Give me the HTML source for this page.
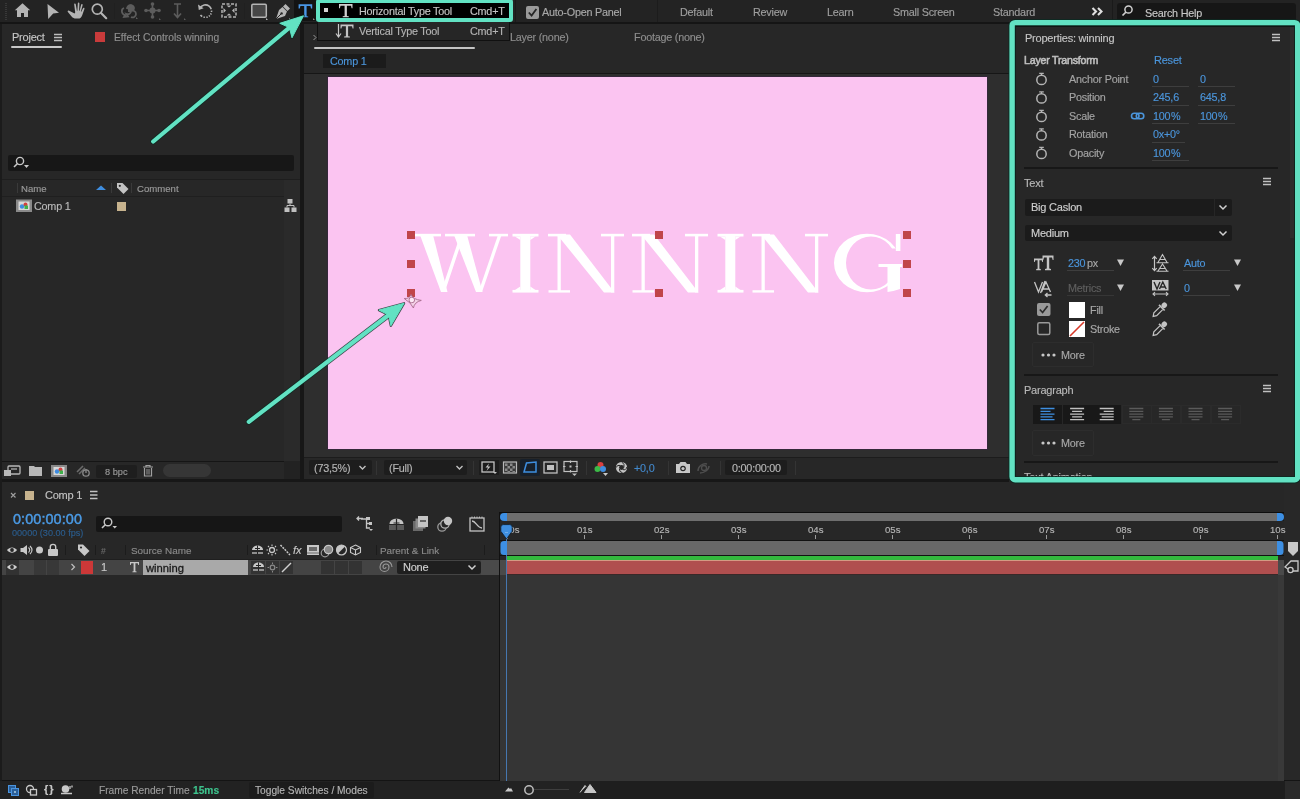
<!DOCTYPE html>
<html><head><meta charset="utf-8">
<style>
*{box-sizing:border-box}
html,body{margin:0;padding:0}
body{width:1300px;height:799px;position:relative;overflow:hidden;background:#1a1a1a;font-family:"Liberation Sans",sans-serif;font-size:10.4px;color:#a6a6a6;line-height:1}
.a{position:absolute}
.t{position:absolute;white-space:pre;will-change:transform;-webkit-text-stroke:0.15px currentColor}
.letter{position:absolute;top:219px;font-size:90px;line-height:90px;font-family:"Liberation Serif",serif;color:#fff;white-space:pre;transform-origin:0 0}
#ov{position:absolute;left:0;top:0;width:1300px;height:799px}
</style></head><body>
<div class="a" style="left:0px;top:0px;width:1300px;height:22px;background:#232323;"></div>
<div class="a" style="left:0px;top:22px;width:1300px;height:2px;background:#151515;"></div>
<div class="a" style="left:0px;top:24px;width:300px;height:455px;background:#272727;"></div>
<div class="a" style="left:300px;top:24px;width:4px;height:458px;background:#171717;"></div>
<div class="a" style="left:0px;top:479px;width:1300px;height:3px;background:#171717;"></div>
<div class="a" style="left:304px;top:24px;width:705px;height:49px;background:#272727;"></div>
<div class="a" style="left:304px;top:73px;width:705px;height:1px;background:#161616;"></div>
<div class="a" style="left:304px;top:74px;width:705px;height:383px;background:#2e2e2e;"></div>
<div class="a" style="left:304px;top:457px;width:705px;height:1px;background:#1c1c1c;"></div>
<div class="a" style="left:304px;top:458px;width:705px;height:21px;background:#272727;"></div>
<div class="a" style="left:327px;top:76px;width:661px;height:374px;background:#34283a;"></div>
<div class="a" style="left:328px;top:77px;width:659px;height:372px;background:#fbc4f1;"></div>
<div class="a" style="left:1009px;top:20px;width:291px;height:463px;background:#272727;"></div>
<div class="a" style="left:0px;top:482px;width:1300px;height:299px;background:#272727;"></div>
<div class="a" style="left:1284px;top:482px;width:16px;height:299px;background:#282828;"></div>
<div class="a" style="left:0px;top:781px;width:1300px;height:18px;background:#222222;"></div>
<div class="a" style="left:0px;top:780px;width:1300px;height:1px;background:#141414;"></div>
<div class="a" style="left:5px;top:3px;width:2px;height:1px;background:#383838;"></div>
<div class="a" style="left:5px;top:5px;width:2px;height:1px;background:#383838;"></div>
<div class="a" style="left:5px;top:7px;width:2px;height:1px;background:#383838;"></div>
<div class="a" style="left:5px;top:9px;width:2px;height:1px;background:#383838;"></div>
<div class="a" style="left:5px;top:11px;width:2px;height:1px;background:#383838;"></div>
<div class="a" style="left:5px;top:13px;width:2px;height:1px;background:#383838;"></div>
<div class="a" style="left:5px;top:15px;width:2px;height:1px;background:#383838;"></div>
<div class="a" style="left:5px;top:17px;width:2px;height:1px;background:#383838;"></div>
<div class="a" style="left:5px;top:19px;width:2px;height:1px;background:#383838;"></div>
<div class="a" style="left:114px;top:3px;width:1px;height:16px;background:#202020;"></div>
<div class="a" style="left:244px;top:3px;width:1px;height:16px;background:#202020;"></div>
<div class="a" style="left:294px;top:0px;width:22px;height:21px;background:#131313;"></div>
<div class="a" style="left:317px;top:21px;width:193px;height:20px;background:#262626;border:1px solid #101010;"></div>
<div class="a" style="left:316px;top:-1px;width:197px;height:23px;background:#000;border:4px solid #62e2c3;border-radius:3px;"></div>
<div class="a" style="left:324px;top:8px;width:4px;height:4px;background:#d2d2d2;"></div>
<div class="t" style="left:359px;top:6.00px;color:#c4c4c4;font-size:10.8px;line-height:10.8px;letter-spacing:-0.22px;">Horizontal Type Tool</div>
<div class="t" style="left:470px;top:6.00px;color:#c4c4c4;font-size:10.8px;line-height:10.8px;letter-spacing:-0.22px;">Cmd+T</div>
<div class="t" style="left:359px;top:26.00px;color:#b4b4b4;font-size:10.8px;line-height:10.8px;letter-spacing:-0.22px;">Vertical Type Tool</div>
<div class="t" style="left:470px;top:26.00px;color:#b4b4b4;font-size:10.8px;line-height:10.8px;letter-spacing:-0.22px;">Cmd+T</div>
<div class="a" style="left:515px;top:0px;width:1px;height:22px;background:#1a1a1a;"></div>
<div class="t" style="left:542px;top:7.00px;color:#a8a8a8;font-size:10.8px;line-height:10.8px;letter-spacing:-0.22px;">Auto-Open Panel</div>
<div class="a" style="left:657px;top:0px;width:1px;height:22px;background:#1c1c1c;"></div>
<div class="t" style="left:680px;top:7.00px;color:#9e9e9e;font-size:10.8px;line-height:10.8px;letter-spacing:-0.22px;">Default</div>
<div class="t" style="left:753px;top:7.00px;color:#9e9e9e;font-size:10.8px;line-height:10.8px;letter-spacing:-0.22px;">Review</div>
<div class="t" style="left:827px;top:7.00px;color:#9e9e9e;font-size:10.8px;line-height:10.8px;letter-spacing:-0.22px;">Learn</div>
<div class="t" style="left:893px;top:7.00px;color:#9e9e9e;font-size:10.8px;line-height:10.8px;letter-spacing:-0.22px;">Small Screen</div>
<div class="t" style="left:993px;top:7.00px;color:#9e9e9e;font-size:10.8px;line-height:10.8px;letter-spacing:-0.22px;">Standard</div>
<div class="a" style="left:1112px;top:0px;width:1px;height:22px;background:#1a1a1a;"></div>
<div class="a" style="left:1117px;top:3px;width:179px;height:19px;background:#161616;border-radius:3px;"></div>
<div class="t" style="left:1145px;top:8.00px;color:#c8c8c8;font-size:10.8px;line-height:10.8px;letter-spacing:-0.22px;">Search Help</div>
<div class="t" style="left:12px;top:32.00px;color:#c6c6c6;font-size:11.0px;line-height:11.0px;letter-spacing:-0.22px;">Project</div>
<div class="a" style="left:11px;top:46px;width:51px;height:2px;background:#c8c8c8;border-radius:1px;"></div>
<div class="a" style="left:95px;top:32px;width:10px;height:10px;background:#c93b3b;"></div>
<div class="t" style="left:114px;top:33.00px;color:#8f8f8f;font-size:10.3px;line-height:10.3px;">Effect Controls winning</div>
<div class="a" style="left:8px;top:155px;width:286px;height:16px;background:#171717;border-radius:2px;"></div>
<div class="a" style="left:0px;top:179px;width:300px;height:1px;background:#1e1e1e;"></div>
<div class="a" style="left:17px;top:183px;width:1px;height:10px;background:#3a3a3a;"></div>
<div class="a" style="left:111px;top:183px;width:1px;height:10px;background:#3a3a3a;"></div>
<div class="a" style="left:131px;top:183px;width:1px;height:10px;background:#3a3a3a;"></div>
<div class="t" style="left:21px;top:184.00px;color:#9a9a9a;font-size:9.6px;line-height:9.6px;">Name</div>
<div class="t" style="left:137px;top:184.00px;color:#9a9a9a;font-size:9.6px;line-height:9.6px;">Comment</div>
<div class="a" style="left:0px;top:196px;width:284px;height:1px;background:#1f1f1f;"></div>
<div class="a" style="left:0px;top:197px;width:284px;height:18px;background:#272727;"></div>
<div class="a" style="left:284px;top:180px;width:16px;height:281px;background:#2a2a2a;"></div>
<div class="t" style="left:34px;top:201.00px;color:#b9b9b9;font-size:10.8px;line-height:10.8px;letter-spacing:-0.22px;">Comp 1</div>
<div class="a" style="left:117px;top:202px;width:9px;height:9px;background:#c7b38e;"></div>
<div class="a" style="left:2px;top:461px;width:282px;height:1px;background:#151515;"></div>
<div class="a" style="left:0px;top:462px;width:300px;height:17px;background:#272727;"></div>
<div class="a" style="left:284px;top:461px;width:16px;height:18px;background:#222;"></div>
<div class="a" style="left:96px;top:465px;width:41px;height:13px;background:#1e1e1e;border-radius:2px;"></div>
<div class="t" style="left:105px;top:468.00px;color:#9a9a9a;font-size:9.2px;line-height:9.2px;">8 bpc</div>
<div class="a" style="left:163px;top:464px;width:48px;height:13px;background:#363636;border-radius:7px;"></div>
<div class="a" style="left:314px;top:47px;width:161px;height:2px;background:#c4c4c4;border-radius:1px;"></div>
<div class="t" style="left:510px;top:32.00px;color:#8d8d8d;font-size:10.8px;line-height:10.8px;letter-spacing:-0.22px;">Layer (none)</div>
<div class="t" style="left:634px;top:32.00px;color:#8d8d8d;font-size:10.8px;line-height:10.8px;letter-spacing:-0.22px;">Footage (none)</div>
<div class="a" style="left:323px;top:54px;width:63px;height:14px;background:#1b1b1b;"></div>
<div class="t" style="left:330px;top:56.00px;color:#4b95db;font-size:10.8px;line-height:10.8px;letter-spacing:-0.22px;">Comp 1</div>
<svg class="a" style="left:0;top:0" width="1300" height="799"><path fill="#ffffff" d="M420 235 L433 235 L447.5 292 L441 292 Z"/><path fill="#ffffff" d="M441 292 L444.8 292 L463.5 236 L460 236 Z"/><path fill="#ffffff" d="M454 235 L467 235 L482.5 292 L476 292 Z"/><path fill="#ffffff" d="M478.5 292 L482 292 L501.5 235 L498 235 Z"/><path fill="#ffffff" d="M415 233.8 H441 V236.4 H415 Z"/><path fill="#ffffff" d="M445 233.8 H475 V236.4 H445 Z"/><path fill="#ffffff" d="M489 233.8 H508 V236.4 H489 Z"/><path fill="#ffffff" d="M557 234.5 L570 234.5 L614.5 292.5 L604 292.5 Z"/><path fill="#ffffff" d="M557.5 236 H560.8 V292 H557.5 Z"/><path fill="#ffffff" d="M611 234.5 H614.3 V292.5 H611 Z"/><path fill="#ffffff" d="M548 233.8 H566 V236.4 H548 Z"/><path fill="#ffffff" d="M548.5 290.2 H570 V292.6 H548.5 Z"/><path fill="#ffffff" d="M601 233.8 H624 V236.4 H601 Z"/><path fill="#ffffff" d="M641 234.5 L654 234.5 L698.5 292.5 L688 292.5 Z"/><path fill="#ffffff" d="M641.5 236 H644.8 V292 H641.5 Z"/><path fill="#ffffff" d="M695 234.5 H698.3 V292.5 H695 Z"/><path fill="#ffffff" d="M632 233.8 H650 V236.4 H632 Z"/><path fill="#ffffff" d="M632.5 290.2 H654 V292.6 H632.5 Z"/><path fill="#ffffff" d="M685 233.8 H708 V236.4 H685 Z"/><path fill="#ffffff" d="M761 234.5 L774 234.5 L818.5 292.5 L808 292.5 Z"/><path fill="#ffffff" d="M761.5 236 H764.8 V292 H761.5 Z"/><path fill="#ffffff" d="M815 234.5 H818.3 V292.5 H815 Z"/><path fill="#ffffff" d="M752 233.8 H770 V236.4 H752 Z"/><path fill="#ffffff" d="M752.5 290.2 H774 V292.6 H752.5 Z"/><path fill="#ffffff" d="M805 233.8 H828 V236.4 H805 Z"/><path fill="#ffffff" d="M520.3 235 H530.3 V291 H520.3 Z"/><path fill="#ffffff" d="M512.5 233.8 H538.5 V236.5 H512.5 Z"/><path fill="#ffffff" d="M512.5 289.9 H538.5 V292.6 H512.5 Z"/><path fill="#ffffff" d="M520.3 236.5 L515 236.5 L520.3 240 Z"/><path fill="#ffffff" d="M530.3 236.5 L535.5 236.5 L530.3 240 Z"/><path fill="#ffffff" d="M520.3 289.9 L515 289.9 L520.3 286.5 Z"/><path fill="#ffffff" d="M530.3 289.9 L535.5 289.9 L530.3 286.5 Z"/><path fill="#ffffff" d="M725.3 235 H735.3 V291 H725.3 Z"/><path fill="#ffffff" d="M717.5 233.8 H743.5 V236.5 H717.5 Z"/><path fill="#ffffff" d="M717.5 289.9 H743.5 V292.6 H717.5 Z"/><path fill="#ffffff" d="M725.3 236.5 L720 236.5 L725.3 240 Z"/><path fill="#ffffff" d="M735.3 236.5 L740.5 236.5 L735.3 240 Z"/><path fill="#ffffff" d="M725.3 289.9 L720 289.9 L725.3 286.5 Z"/><path fill="#ffffff" d="M735.3 289.9 L740.5 289.9 L735.3 286.5 Z"/><path fill="#ffffff" fill-rule="evenodd" d="M834 263 A33 29.3 0 1 0 900 263 A33 29.3 0 1 0 834 263 Z M846 263 A25 26.4 0 1 0 896 263 A25 26.4 0 1 0 846 263 Z"/><rect x="881" y="248.5" width="24" height="15.5" fill="#fbc4f1"/><rect x="895.8" y="234" width="4.6" height="17" fill="#ffffff"/><path fill="#ffffff" d="M878.5 264 H902 V267 H900 V289 Q893 291.5 887.5 292 V267 H878.5 Z"/></svg>
<div class="a" style="left:406.5px;top:231px;width:8px;height:8px;background:#c0454a;"></div>
<div class="a" style="left:406.5px;top:260px;width:8px;height:8px;background:#c0454a;"></div>
<div class="a" style="left:406.5px;top:289px;width:8px;height:8px;background:#c0454a;"></div>
<div class="a" style="left:654.5px;top:231px;width:8px;height:8px;background:#c0454a;"></div>
<div class="a" style="left:654.5px;top:289px;width:8px;height:8px;background:#c0454a;"></div>
<div class="a" style="left:903px;top:231px;width:8px;height:8px;background:#c0454a;"></div>
<div class="a" style="left:903px;top:260px;width:8px;height:8px;background:#c0454a;"></div>
<div class="a" style="left:903px;top:289px;width:8px;height:8px;background:#c0454a;"></div>
<div class="a" style="left:309px;top:460px;width:63px;height:15px;background:#1d1d1d;border-radius:2px;"></div>
<div class="t" style="left:314px;top:463.00px;color:#b4b4b4;font-size:10.8px;line-height:10.8px;letter-spacing:-0.22px;">(73,5%)</div>
<div class="a" style="left:376px;top:461px;width:1px;height:14px;background:#343434;"></div>
<div class="a" style="left:384px;top:460px;width:83px;height:15px;background:#1d1d1d;border-radius:2px;"></div>
<div class="t" style="left:389px;top:463.00px;color:#b4b4b4;font-size:10.8px;line-height:10.8px;letter-spacing:-0.22px;">(Full)</div>
<div class="a" style="left:473px;top:461px;width:1px;height:14px;background:#343434;"></div>
<div class="a" style="left:479px;top:460px;width:20px;height:15px;background:#1d1d1d;"></div>
<div class="a" style="left:520px;top:459px;width:20px;height:17px;background:#17202b;border-radius:2px;"></div>
<div class="a" style="left:586px;top:461px;width:1px;height:14px;background:#343434;"></div>
<div class="t" style="left:634px;top:463.00px;color:#4389cc;font-size:10.8px;line-height:10.8px;letter-spacing:-0.22px;">+0,0</div>
<div class="a" style="left:668px;top:461px;width:1px;height:14px;background:#343434;"></div>
<div class="a" style="left:720px;top:461px;width:1px;height:14px;background:#343434;"></div>
<div class="a" style="left:725px;top:460px;width:62px;height:15px;background:#1d1d1d;border-radius:2px;"></div>
<div class="t" style="left:732px;top:463.00px;color:#b8b8b8;font-size:10.8px;line-height:10.8px;letter-spacing:-0.22px;">0:00:00:00</div>
<div class="a" style="left:795px;top:461px;width:1px;height:14px;background:#343434;"></div>
<div class="a" style="left:1290px;top:26px;width:5px;height:212px;background:#2e2e2e;"></div>
<div class="t" style="left:1025px;top:33.00px;color:#c4c4c4;font-size:11.0px;line-height:11.0px;letter-spacing:-0.22px;">Properties: winning</div>
<div class="t" style="left:1024px;top:55.00px;color:#c0c0c0;font-size:10.6px;line-height:10.6px;-webkit-text-stroke:0.55px #c0c0c0;letter-spacing:-0.2px;">Layer Transform</div>
<div class="t" style="left:1154px;top:55.00px;color:#4b95db;font-size:11.0px;line-height:11.0px;letter-spacing:-0.22px;">Reset</div>
<div class="t" style="left:1069px;top:74.00px;color:#a4a4a4;font-size:10.8px;line-height:10.8px;letter-spacing:-0.22px;">Anchor Point</div>
<div class="t" style="left:1153px;top:74.00px;color:#4b95db;font-size:10.8px;line-height:10.8px;letter-spacing:-0.22px;">0</div>
<div class="a" style="left:1152px;top:86px;width:37px;height:1px;background:#3e3e3e;"></div>
<div class="t" style="left:1200px;top:74.00px;color:#4b95db;font-size:10.8px;line-height:10.8px;letter-spacing:-0.22px;">0</div>
<div class="a" style="left:1198px;top:86px;width:37px;height:1px;background:#3e3e3e;"></div>
<div class="t" style="left:1069px;top:92.00px;color:#a4a4a4;font-size:10.8px;line-height:10.8px;letter-spacing:-0.22px;">Position</div>
<div class="t" style="left:1153px;top:92.00px;color:#4b95db;font-size:10.8px;line-height:10.8px;letter-spacing:-0.22px;">245,6</div>
<div class="a" style="left:1152px;top:104.5px;width:37px;height:1px;background:#3e3e3e;"></div>
<div class="t" style="left:1200px;top:92.00px;color:#4b95db;font-size:10.8px;line-height:10.8px;letter-spacing:-0.22px;">645,8</div>
<div class="a" style="left:1198px;top:104.5px;width:37px;height:1px;background:#3e3e3e;"></div>
<div class="t" style="left:1069px;top:111.00px;color:#a4a4a4;font-size:10.8px;line-height:10.8px;letter-spacing:-0.22px;">Scale</div>
<div class="t" style="left:1153px;top:111.00px;color:#4b95db;font-size:10.8px;line-height:10.8px;letter-spacing:-0.22px;">100&#8202;%</div>
<div class="a" style="left:1152px;top:123px;width:37px;height:1px;background:#3e3e3e;"></div>
<div class="t" style="left:1200px;top:111.00px;color:#4b95db;font-size:10.8px;line-height:10.8px;letter-spacing:-0.22px;">100&#8202;%</div>
<div class="a" style="left:1198px;top:123px;width:37px;height:1px;background:#3e3e3e;"></div>
<div class="t" style="left:1069px;top:129.00px;color:#a4a4a4;font-size:10.8px;line-height:10.8px;letter-spacing:-0.22px;">Rotation</div>
<div class="t" style="left:1153px;top:129.00px;color:#4b95db;font-size:10.8px;line-height:10.8px;letter-spacing:-0.22px;">0x+0°</div>
<div class="a" style="left:1152px;top:141.5px;width:33px;height:1px;background:#3e3e3e;"></div>
<div class="t" style="left:1069px;top:148.00px;color:#a4a4a4;font-size:10.8px;line-height:10.8px;letter-spacing:-0.22px;">Opacity</div>
<div class="t" style="left:1153px;top:148.00px;color:#4b95db;font-size:10.8px;line-height:10.8px;letter-spacing:-0.22px;">100&#8202;%</div>
<div class="a" style="left:1152px;top:160px;width:37px;height:1px;background:#3e3e3e;"></div>
<div class="a" style="left:1024px;top:167px;width:254px;height:2px;background:#171717;"></div>
<div class="t" style="left:1024px;top:178.00px;color:#b8b8b8;font-size:11.0px;line-height:11.0px;letter-spacing:-0.22px;">Text</div>
<div class="a" style="left:1025px;top:199px;width:207px;height:17px;background:#1b1b1b;border-radius:2px;"></div>
<div class="a" style="left:1214px;top:199px;width:1px;height:17px;background:#262626;"></div>
<div class="t" style="left:1031px;top:202.00px;color:#cfcfcf;font-size:11.0px;line-height:11.0px;letter-spacing:-0.22px;">Big Caslon</div>
<div class="a" style="left:1025px;top:225px;width:207px;height:16px;background:#1b1b1b;border-radius:2px;"></div>
<div class="t" style="left:1031px;top:228.00px;color:#cfcfcf;font-size:11.0px;line-height:11.0px;letter-spacing:-0.22px;">Medium</div>
<div class="t" style="left:1068px;top:258.00px;color:#4b95db;font-size:10.8px;line-height:10.8px;letter-spacing:-0.22px;">230</div>
<div class="t" style="left:1087px;top:258.00px;color:#a8a8a8;font-size:10.8px;line-height:10.8px;letter-spacing:-0.22px;">px</div>
<div class="a" style="left:1067px;top:270px;width:47px;height:1px;background:#3e3e3e;"></div>
<div class="t" style="left:1184px;top:258.00px;color:#4b95db;font-size:10.8px;line-height:10.8px;letter-spacing:-0.22px;">Auto</div>
<div class="a" style="left:1183px;top:270px;width:47px;height:1px;background:#3e3e3e;"></div>
<div class="t" style="left:1068px;top:283.00px;color:#5f5f5f;font-size:10.8px;line-height:10.8px;letter-spacing:-0.22px;">Metrics</div>
<div class="a" style="left:1067px;top:295px;width:47px;height:1px;background:#363636;"></div>
<div class="t" style="left:1184px;top:283.00px;color:#4b95db;font-size:10.8px;line-height:10.8px;letter-spacing:-0.22px;">0</div>
<div class="a" style="left:1183px;top:295px;width:47px;height:1px;background:#3e3e3e;"></div>
<div class="a" style="left:1069px;top:302px;width:16px;height:16px;background:#ffffff;"></div>
<div class="a" style="left:1069px;top:321px;width:16px;height:16px;background:#ffffff;"></div>
<div class="t" style="left:1090px;top:305.00px;color:#a8a8a8;font-size:10.8px;line-height:10.8px;letter-spacing:-0.22px;">Fill</div>
<div class="t" style="left:1090px;top:324.00px;color:#a8a8a8;font-size:10.8px;line-height:10.8px;letter-spacing:-0.22px;">Stroke</div>
<div class="a" style="left:1032px;top:342px;width:62px;height:25px;background:transparent;border:1px solid #2d2d2d;border-radius:2px;"></div>
<div class="t" style="left:1061px;top:350.00px;color:#a8a8a8;font-size:10.8px;line-height:10.8px;letter-spacing:-0.22px;">More</div>
<div class="a" style="left:1024px;top:374px;width:254px;height:2px;background:#171717;"></div>
<div class="t" style="left:1024px;top:385.00px;color:#b8b8b8;font-size:11.0px;line-height:11.0px;letter-spacing:-0.22px;">Paragraph</div>
<div class="a" style="left:1033px;top:405px;width:29px;height:19px;background:#181818;"></div>
<div class="a" style="left:1063px;top:405px;width:29px;height:19px;background:#181818;"></div>
<div class="a" style="left:1092px;top:405px;width:29px;height:19px;background:#181818;"></div>
<div class="a" style="left:1122px;top:405px;width:30px;height:19px;background:transparent;border:1px solid #2b2b2b;"></div>
<div class="a" style="left:1151px;top:405px;width:30px;height:19px;background:transparent;border:1px solid #2b2b2b;"></div>
<div class="a" style="left:1181px;top:405px;width:30px;height:19px;background:transparent;border:1px solid #2b2b2b;"></div>
<div class="a" style="left:1211px;top:405px;width:30px;height:19px;background:transparent;border:1px solid #2b2b2b;"></div>
<div class="a" style="left:1032px;top:430px;width:62px;height:26px;background:transparent;border:1px solid #2d2d2d;border-radius:2px;"></div>
<div class="t" style="left:1061px;top:438.00px;color:#a8a8a8;font-size:10.8px;line-height:10.8px;letter-spacing:-0.22px;">More</div>
<div class="a" style="left:1024px;top:461px;width:254px;height:2px;background:#171717;"></div>
<div class="t" style="left:1024px;top:472.00px;color:#b8b8b8;font-size:11.0px;line-height:11.0px;letter-spacing:-0.22px;">Text Animation</div>
<div class="a" style="left:1015px;top:26px;width:280px;height:451px;background:transparent;border:1px solid #111;border-bottom:none;"></div>
<div class="a" style="left:25px;top:491px;width:9px;height:9px;background:#c7b38e;"></div>
<div class="t" style="left:45px;top:490.00px;color:#c2c2c2;font-size:11.0px;line-height:11.0px;letter-spacing:-0.22px;">Comp 1</div>
<div class="t" style="left:13px;top:512.00px;color:#4b9be6;font-size:14.4px;line-height:14.4px;-webkit-text-stroke:0.45px #4b9be6;letter-spacing:0.1px;">0:00:00:00</div>
<div class="t" style="left:11.5px;top:529.00px;color:#2b5c8c;font-size:9.1px;line-height:9.1px;">00000 (30.00 fps)</div>
<div class="a" style="left:96px;top:516px;width:246px;height:16px;background:#161616;border-radius:2px;"></div>
<div class="a" style="left:65px;top:545px;width:1px;height:10px;background:#1c1c1c;"></div>
<div class="a" style="left:95px;top:545px;width:1px;height:10px;background:#1c1c1c;"></div>
<div class="a" style="left:125px;top:545px;width:1px;height:10px;background:#1c1c1c;"></div>
<div class="a" style="left:247px;top:545px;width:1px;height:10px;background:#1c1c1c;"></div>
<div class="a" style="left:376px;top:545px;width:1px;height:10px;background:#1c1c1c;"></div>
<div class="a" style="left:484px;top:545px;width:1px;height:10px;background:#1c1c1c;"></div>
<div class="t" style="left:101px;top:547.00px;color:#6a6a6a;font-size:8.5px;line-height:8.5px;">#</div>
<div class="t" style="left:131px;top:546.00px;color:#8a8a8a;font-size:9.9px;line-height:9.9px;">Source Name</div>
<div class="t" style="left:293px;top:545.00px;color:#c8c8c8;font-size:11px;line-height:11px;font-style:italic;font-family:"Liberation Serif",serif;">fx</div>
<div class="t" style="left:380px;top:546.00px;color:#8a8a8a;font-size:9.9px;line-height:9.9px;">Parent &amp; Link</div>
<div class="a" style="left:0px;top:559px;width:499px;height:1px;background:#1f1f1f;"></div>
<div class="a" style="left:0px;top:560px;width:499px;height:15px;background:#444444;"></div>
<div class="a" style="left:6px;top:560px;width:13px;height:15px;background:#323232;"></div>
<div class="a" style="left:34px;top:560px;width:12px;height:15px;background:#383838;"></div>
<div class="a" style="left:47px;top:560px;width:12px;height:15px;background:#383838;"></div>
<div class="a" style="left:81px;top:561px;width:12px;height:13px;background:#cc3838;"></div>
<div class="t" style="left:101px;top:562.00px;color:#c8c8c8;font-size:11.0px;line-height:11.0px;letter-spacing:-0.22px;">1</div>
<div class="a" style="left:143px;top:560px;width:105px;height:15px;background:#a9a9a9;"></div>
<div class="t" style="left:146px;top:563.00px;color:#1a1a1a;font-size:11.2px;line-height:11.2px;-webkit-text-stroke:0.3px #1a1a1a;">winning</div>
<div class="a" style="left:248px;top:560px;width:3px;height:15px;background:#444444;"></div>
<div class="a" style="left:251px;top:561px;width:14px;height:13px;background:#333;"></div>
<div class="a" style="left:266px;top:561px;width:13px;height:13px;background:#333;"></div>
<div class="a" style="left:280px;top:561px;width:13px;height:13px;background:#333;"></div>
<div class="a" style="left:321px;top:561px;width:13px;height:13px;background:#333;"></div>
<div class="a" style="left:335px;top:561px;width:13px;height:13px;background:#333;"></div>
<div class="a" style="left:349px;top:561px;width:13px;height:13px;background:#333;"></div>
<div class="a" style="left:397px;top:561px;width:84px;height:13px;background:#1f1f1f;border-radius:2px;"></div>
<div class="t" style="left:403px;top:562.00px;color:#d0d0d0;font-size:11.0px;line-height:11.0px;letter-spacing:-0.22px;">None</div>
<div class="a" style="left:481px;top:560px;width:18px;height:15px;background:#4a4a4a;"></div>
<div class="a" style="left:499px;top:512px;width:1px;height:269px;background:#111111;"></div>
<div class="a" style="left:500px;top:512px;width:784px;height:1px;background:#0e0e0e;"></div>
<div class="a" style="left:500px;top:513px;width:784px;height:8px;background:#1a1a1a;"></div>
<div class="a" style="left:507px;top:513px;width:771px;height:8px;background:#6e6e6e;"></div>
<div class="t" style="left:504px;top:525.00px;color:#b4b4b4;font-size:9.6px;line-height:9.6px;">00s</div>
<div class="a" style="left:507px;top:535px;width:1px;height:4px;background:#9a9a9a;"></div>
<div class="t" style="left:577px;top:525.00px;color:#b4b4b4;font-size:9.6px;line-height:9.6px;">01s</div>
<div class="a" style="left:584px;top:535px;width:1px;height:4px;background:#9a9a9a;"></div>
<div class="t" style="left:654px;top:525.00px;color:#b4b4b4;font-size:9.6px;line-height:9.6px;">02s</div>
<div class="a" style="left:661px;top:535px;width:1px;height:4px;background:#9a9a9a;"></div>
<div class="t" style="left:731px;top:525.00px;color:#b4b4b4;font-size:9.6px;line-height:9.6px;">03s</div>
<div class="a" style="left:738px;top:535px;width:1px;height:4px;background:#9a9a9a;"></div>
<div class="t" style="left:808px;top:525.00px;color:#b4b4b4;font-size:9.6px;line-height:9.6px;">04s</div>
<div class="a" style="left:815px;top:535px;width:1px;height:4px;background:#9a9a9a;"></div>
<div class="t" style="left:885px;top:525.00px;color:#b4b4b4;font-size:9.6px;line-height:9.6px;">05s</div>
<div class="a" style="left:892px;top:535px;width:1px;height:4px;background:#9a9a9a;"></div>
<div class="t" style="left:962px;top:525.00px;color:#b4b4b4;font-size:9.6px;line-height:9.6px;">06s</div>
<div class="a" style="left:969px;top:535px;width:1px;height:4px;background:#9a9a9a;"></div>
<div class="t" style="left:1039px;top:525.00px;color:#b4b4b4;font-size:9.6px;line-height:9.6px;">07s</div>
<div class="a" style="left:1046px;top:535px;width:1px;height:4px;background:#9a9a9a;"></div>
<div class="t" style="left:1116px;top:525.00px;color:#b4b4b4;font-size:9.6px;line-height:9.6px;">08s</div>
<div class="a" style="left:1123px;top:535px;width:1px;height:4px;background:#9a9a9a;"></div>
<div class="t" style="left:1193px;top:525.00px;color:#b4b4b4;font-size:9.6px;line-height:9.6px;">09s</div>
<div class="a" style="left:1200px;top:535px;width:1px;height:4px;background:#9a9a9a;"></div>
<div class="t" style="left:1270px;top:525.00px;color:#b4b4b4;font-size:9.6px;line-height:9.6px;">10s</div>
<div class="a" style="left:1277px;top:535px;width:1px;height:4px;background:#9a9a9a;"></div>
<div class="a" style="left:500px;top:540px;width:784px;height:1px;background:#111111;"></div>
<div class="a" style="left:507px;top:541px;width:771px;height:14px;background:#686868;"></div>
<div class="a" style="left:500px;top:555px;width:784px;height:1px;background:#111111;"></div>
<div class="a" style="left:507px;top:556px;width:771px;height:4px;background:#33b83e;"></div>
<div class="a" style="left:500px;top:560px;width:7px;height:15px;background:#4a4a4a;"></div>
<div class="a" style="left:507px;top:560px;width:771px;height:14px;background:#b04f4f;"></div>
<div class="a" style="left:507px;top:574px;width:771px;height:1px;background:#3a2828;"></div>
<div class="a" style="left:507px;top:560px;width:771px;height:1px;background:#d49a84;"></div>
<div class="a" style="left:1278px;top:560px;width:6px;height:15px;background:#4a4a4a;"></div>
<div class="a" style="left:500px;top:575px;width:784px;height:206px;background:#353535;"></div>
<div class="a" style="left:1278px;top:575px;width:6px;height:206px;background:#393939;"></div>
<div class="a" style="left:506px;top:530px;width:1px;height:251px;background:#4677b0;"></div>
<div class="t" style="left:44px;top:784.00px;color:#c8c8c8;font-size:11px;line-height:11px;font-weight:bold;letter-spacing:1px;">{}</div>
<div class="t" style="left:99px;top:786.00px;color:#9a9a9a;font-size:10.2px;line-height:10.2px;">Frame Render Time</div>
<div class="t" style="left:193px;top:786.00px;color:#3ec48e;font-size:10.2px;line-height:10.2px;font-weight:bold;">15ms</div>
<div class="a" style="left:249px;top:782px;width:125px;height:16px;background:#1c1c1c;border-radius:2px;"></div>
<div class="t" style="left:255px;top:786.00px;color:#b4b4b4;font-size:10.2px;line-height:10.2px;">Toggle Switches / Modes</div>
<div class="a" style="left:600px;top:781px;width:685px;height:18px;background:#1e1e1e;"></div>
<div class="a" style="left:1285px;top:781px;width:15px;height:18px;background:#2a2a2a;"></div>
<div class="a" style="left:0px;top:24px;width:2px;height:757px;background:#1b1b1b;"></div>
<svg id="ov" width="1300" height="799" viewBox="0 0 1300 799">
<path d="M22.5 3.2 L14.8 10.2 L17 10.2 L17 17 L21 17 L21 13 L24 13 L24 17 L28 17 L28 10.2 L30.2 10.2 Z" fill="#b4b4b4"/>
<path d="M47.5 4 L59 12.8 L53.2 13.6 L48.2 19 Z" fill="#b4b4b4"/>
<path d="M69.2 10.8 C68.2 10 67.2 11 67.9 12 L71.6 16.6 C72.8 18 74.2 18.6 76 18.6 L78 18.6 C80.2 18.6 81.6 17.2 82.2 15.2 L84.4 9 C84.8 7.8 83.4 7.2 82.9 8.4 L81.3 11.8 L80.9 11.6 L82.6 5.2 C82.9 4 81.4 3.6 81.1 4.8 L79.6 10.8 L79.1 10.7 L79.4 3.4 C79.4 2.2 77.8 2.2 77.8 3.4 L77.4 10.7 L76.9 10.8 L75.8 4.4 C75.6 3.2 74 3.4 74.2 4.6 L75.2 12.6 L74.6 13.6 Z" fill="#b4b4b4"/>
<circle cx="97.3" cy="9.2" r="5" fill="none" stroke="#b4b4b4" stroke-width="1.7"/><path d="M100.8 12.8 L106.2 18.2" stroke="#b4b4b4" stroke-width="2.2" stroke-linecap="round"/>
<path d="M124 8 C121 9 121 14 125 15 L124 17 L128 16.5 L126.5 14 C129 15 131 13 131 11 C133 10 136 11 136 14 C136 17 133 18 131 17 M127 9 C127 5 134 4 134 8 C134 10 131 11 128 11" fill="none" stroke="#5c5c5c" stroke-width="1.8"/><circle cx="130.5" cy="7.5" r="3.2" fill="#5c5c5c"/><path d="M136 17 L138 19 L136 19Z" fill="#5c5c5c"/>
<path d="M152.5 3.5 V17.5 M145.5 10.5 H159.5" stroke="#5c5c5c" stroke-width="1.6"/><circle cx="152.5" cy="10.5" r="3" fill="#5c5c5c"/><circle cx="152.5" cy="4" r="1.8" fill="#5c5c5c"/><circle cx="152.5" cy="17" r="1.8" fill="#5c5c5c"/><circle cx="146" cy="10.5" r="1.8" fill="#5c5c5c"/><circle cx="159" cy="10.5" r="1.8" fill="#5c5c5c"/><path d="M159 18 L161 20 L159 20Z" fill="#5c5c5c"/>
<path d="M174 4 H181 M177.5 4 V17 M174 13.5 L177.5 17.5 L181 13.5" fill="none" stroke="#5c5c5c" stroke-width="1.6"/><path d="M184 18 L186 20 L184 20Z" fill="#5c5c5c"/>
<path d="M200 8 A6.2 6.2 0 1 1 200.5 15" fill="none" stroke="#b4b4b4" stroke-width="1.6" stroke-dasharray="14 1.3 1.3 1.3 1.3 1.3 1.3 1.3 1.3 1.3 1.3 1.3"/><path d="M198 4.5 L198.8 10 L203.6 8.2 Z" fill="#b4b4b4"/>
<rect x="222" y="4" width="14" height="13" fill="none" stroke="#b4b4b4" stroke-width="1.5" stroke-dasharray="3 1.5"/><path d="M226 10.5 L223.5 8 V13 Z M232 10.5 L234.5 8 V13 Z M229 7.5 L226.5 5.5 H231.5 Z M229 13.5 L226.5 15.5 H231.5Z" fill="#b4b4b4"/>
<rect x="251.8" y="4.3" width="14.5" height="13" rx="1.2" fill="#474747" stroke="#b4b4b4" stroke-width="1.5"/><path d="M266 18 L268 20 L266 20Z" fill="#b4b4b4"/>
<path d="M285.5 4 L290 8.5 L287.5 11 L283 6.5 Z" fill="#b4b4b4"/><path d="M282.5 7 L287 11.5 L285 16 L276 19 L279 10 Z" fill="#b4b4b4"/><path d="M276 19 L281 14" stroke="#232323" stroke-width="1"/><circle cx="281.6" cy="13.4" r="1.2" fill="#232323"/><path d="M289 18 L291 20 L289 20Z" fill="#b4b4b4"/>
<path d="M298.6 4.2 H312.2 V8.4 H311 L310.4 6.1 H306.6 V16.2 L308.2 16.4 V17.2 H302.6 V16.4 L304.2 16.2 V6.1 H300.4 L299.8 8.4 H298.6 Z" fill="#4a97e6"/><path d="M313 18 L315 20 L313 20Z" fill="#888"/>
<path d="M339 4 H352.5 V8.2 H351.6 L351 5.8 H346.9 V15.9 L348.8 16.2 V17.2 H342.7 V16.2 L344.6 15.9 V5.8 H340.5 L339.9 8.2 H339 Z" fill="#cfcfcf"/>
<path d="M338.5 24 V36.5 M336 33.5 L338.5 37 L341 33.5" fill="none" stroke="#c9c9c9" stroke-width="1.2"/>
<path d="M340.5 24.5 H353.5 V28.6 H352.6 L352 26.3 H348.1 V36.2 L349.9 36.5 V37.5 H344.1 V36.5 L345.9 36.2 V26.3 H342 L341.4 28.6 H340.5 Z" fill="#c4c4c4"/>
<rect x="526" y="6" width="13" height="13" rx="2" fill="#9a9a9a"/><path d="M528.8 12.5 L531.6 15.5 L536.4 9" fill="none" stroke="#262626" stroke-width="1.8"/>
<path d="M1092.5 8 L1096 11.5 L1092.5 15 M1098 8 L1101.5 11.5 L1098 15" fill="none" stroke="#e0e0e0" stroke-width="2.1"/>
<circle cx="1128.5" cy="9.5" r="3.6" fill="none" stroke="#cfcfcf" stroke-width="1.5"/><path d="M1126 12 L1122.5 15.5" stroke="#cfcfcf" stroke-width="1.7"/>
<path d="M54 34.5 H62 M54 37.5 H62 M54 40.5 H62" stroke="#bdbdbd" stroke-width="1.3"/>
<circle cx="20" cy="161" r="3.6" fill="none" stroke="#c8c8c8" stroke-width="1.4"/><path d="M17.5 163.5 L14 167" stroke="#c8c8c8" stroke-width="1.6"/><path d="M24 165 H29 L26.5 168 Z" fill="#c8c8c8"/>
<path d="M96 190 L101 185.5 L106 190 Z" fill="#3f8ee0"/>
<path d="M117 183 H122.5 L128.5 189 L123.5 194 L117 187.5 Z" fill="#c4c4c4"/><circle cx="119.8" cy="185.8" r="1.1" fill="#262626"/>
<rect x="16" y="199.5" width="16" height="12.5" fill="#8a8a8a"/><rect x="18.5" y="201.5" width="11" height="8.5" fill="#d8d8d8"/><circle cx="22" cy="206.5" r="2.2" fill="#3d8be0"/><circle cx="25.5" cy="204.5" r="2" fill="#d24040"/><rect x="24.5" y="205.5" width="3.5" height="3.5" fill="#3db04a"/>
<rect x="287.5" y="199" width="5" height="4.5" fill="#c0c0c0"/><rect x="284.5" y="207.5" width="5" height="4.5" fill="#c0c0c0"/><rect x="291.5" y="207.5" width="5" height="4.5" fill="#c0c0c0"/><path d="M290 203.5 V205.5 M287 207.5 V205.5 H294 V207.5" fill="none" stroke="#c0c0c0" stroke-width="1"/>
<rect x="8" y="466" width="12" height="8" rx="1" fill="none" stroke="#b8b8b8" stroke-width="1.3"/><rect x="4" y="470" width="7" height="6" fill="#b8b8b8"/><path d="M11 469 H17" stroke="#b8b8b8" stroke-width="1.2"/>
<path d="M29 466 H34 L35 467 H42 V476 H29 Z" fill="#b8b8b8"/>
<rect x="51" y="465" width="16" height="12" fill="#8a8a8a"/><rect x="53.5" y="467" width="11" height="8" fill="#d8d8d8"/><circle cx="57" cy="471.5" r="2.2" fill="#3d8be0"/><circle cx="60.5" cy="469.5" r="2" fill="#d24040"/><rect x="59.5" y="470.5" width="3.5" height="3.5" fill="#3db04a"/>
<path d="M77 472 L83 466 M79 474 L85 468" stroke="#6a6a6a" stroke-width="1.6"/><circle cx="86" cy="473" r="3.2" fill="none" stroke="#8a8a8a" stroke-width="1.3"/><path d="M86 469 V473" stroke="#8a8a8a" stroke-width="1.3"/>
<path d="M143 467 H153 M146 467 V465.5 H150 V467 M144.5 468 V476 H151.5 V468" fill="none" stroke="#a0a0a0" stroke-width="1.2"/><path d="M147 469 V474.5 M149 469 V474.5" stroke="#a0a0a0" stroke-width="0.9"/>
<path d="M313.5 35 L316 37.5 L313.5 40" fill="none" stroke="#9a9a9a" stroke-width="1"/>
<path d="M404.2 298.5 Q409.5 299 411 294.5 Q413 299.5 421.3 300.4 Q414.5 302 413.4 308 Q411 302.5 404.2 298.5 Z" fill="#f2d0e6" stroke="#a86a8c" stroke-width="0.9"/><circle cx="411.8" cy="300" r="2.8" fill="#fde8f6" stroke="#a86a8c" stroke-width="0.9"/>
<path d="M359.5 466 L362.5 469 L365.5 466" fill="none" stroke="#c0c0c0" stroke-width="1.4"/>
<path d="M456.5 466 L459.5 469 L462.5 466" fill="none" stroke="#c0c0c0" stroke-width="1.4"/>
<rect x="482" y="462" width="12" height="10" fill="none" stroke="#c4c4c4" stroke-width="1.3"/><path d="M489 463.5 L485.5 467.5 H488 L486.5 471 L490.5 466.5 H488 Z" fill="#c4c4c4"/><path d="M493 472 H497 L495 474 Z" fill="#c4c4c4"/>
<rect x="503.5" y="462" width="13" height="11" fill="#3a3a3a" stroke="#b8b8b8" stroke-width="1.2"/><path d="M505 463.5h2.5v2.5h-2.5zM510 463.5h2.5v2.5h-2.5zM507.5 466h2.5v2.5h-2.5zM512.5 466h2.5v2.5h-2.5zM505 468.5h2.5v2.5h-2.5zM510 468.5h2.5v2.5h-2.5zM507.5 471h2.5v1h-2.5zM512.5 471h2.5v1h-2.5z" fill="#8a8a8a"/>
<path d="M524 472 L526.5 463 L536 462 L536 472 Z" fill="none" stroke="#3e8ee0" stroke-width="1.5"/>
<rect x="544" y="462" width="13" height="11" fill="none" stroke="#c0c0c0" stroke-width="1.3"/><rect x="547" y="465" width="7" height="5" fill="#c0c0c0"/>
<rect x="564" y="461.5" width="13" height="10" fill="none" stroke="#c0c0c0" stroke-width="1.2"/><path d="M570.5 460.5 V463 M570.5 470 V472.5 M563 466.5 H565.5 M575.5 466.5 H578" stroke="#c0c0c0" stroke-width="1.2"/><rect x="569.5" y="465.5" width="2" height="2" fill="#c0c0c0"/><path d="M572 473.5 H577 L574.5 476 Z" fill="#c0c0c0"/>
<circle cx="600.5" cy="465" r="3" fill="#d84040"/><circle cx="597.5" cy="469" r="3" fill="#3cba48"/><circle cx="603" cy="469" r="3" fill="#3f8ee0"/><path d="M603 473 H608 L605.5 476 Z" fill="#c8c8c8"/>
<circle cx="621.5" cy="467.5" r="5.6" fill="#c4c4c4"/><circle cx="621.5" cy="467.5" r="2.4" fill="#272727"/><path d="M623.9 467.5 Q625 464 622 462.2 M620.3 465.4 Q617 464.5 616.2 467.6 M619.4 468.8 Q619 472 622.5 472.8 M622.8 469.6 Q626 470.5 626.9 467" fill="none" stroke="#272727" stroke-width="1"/>
<path d="M676 464 H679 L680.5 462 H685.5 L687 464 H690 V473 H676 Z" fill="#c8c8c8"/><circle cx="683" cy="468.5" r="2.8" fill="#262626"/><circle cx="683" cy="468.5" r="1.6" fill="#c8c8c8"/>
<path d="M698 471 C698 466 703 463 707 464 M700 473 C704 473 709 470 709 466" fill="none" stroke="#4e4e4e" stroke-width="1.5"/><circle cx="704" cy="468" r="2.5" fill="none" stroke="#4e4e4e" stroke-width="1.3"/>
<path d="M1272 34.5 H1280 M1272 37.5 H1280 M1272 40.5 H1280" stroke="#c0c0c0" stroke-width="1.3"/>
<circle cx="1041.5" cy="79.9" r="4.7" fill="none" stroke="#b4b4b4" stroke-width="1.5"/><path d="M1039.2 73.4 H1043.8 M1041.5 73.4 V75.4" stroke="#b4b4b4" stroke-width="1.3"/>
<circle cx="1041.5" cy="98.4" r="4.7" fill="none" stroke="#b4b4b4" stroke-width="1.5"/><path d="M1039.2 91.9 H1043.8 M1041.5 91.9 V93.9" stroke="#b4b4b4" stroke-width="1.3"/>
<circle cx="1041.5" cy="116.9" r="4.7" fill="none" stroke="#b4b4b4" stroke-width="1.5"/><path d="M1039.2 110.4 H1043.8 M1041.5 110.4 V112.4" stroke="#b4b4b4" stroke-width="1.3"/>
<circle cx="1041.5" cy="135.4" r="4.7" fill="none" stroke="#b4b4b4" stroke-width="1.5"/><path d="M1039.2 128.9 H1043.8 M1041.5 128.9 V130.9" stroke="#b4b4b4" stroke-width="1.3"/>
<circle cx="1041.5" cy="153.9" r="4.7" fill="none" stroke="#b4b4b4" stroke-width="1.5"/><path d="M1039.2 147.4 H1043.8 M1041.5 147.4 V149.4" stroke="#b4b4b4" stroke-width="1.3"/>
<rect x="1131.5" y="113.3" width="7.5" height="5.4" rx="2.7" fill="none" stroke="#4b95db" stroke-width="1.6"/><rect x="1136.3" y="113.3" width="7.5" height="5.4" rx="2.7" fill="none" stroke="#4b95db" stroke-width="1.6"/>
<path d="M1263 178.5 H1271 M1263 181.5 H1271 M1263 184.5 H1271" stroke="#c0c0c0" stroke-width="1.3"/>
<path d="M1219.5 205.5 L1223 209 L1226.5 205.5" fill="none" stroke="#d0d0d0" stroke-width="1.5"/>
<path d="M1219.5 231.5 L1223 235 L1226.5 231.5" fill="none" stroke="#d0d0d0" stroke-width="1.5"/>
<path d="M1117 259.5 H1124 L1120.5 266 Z" fill="#c8c8c8"/>
<path d="M1234 259.5 H1241 L1237.5 266 Z" fill="#c8c8c8"/>
<path d="M1117 284.5 H1124 L1120.5 291 Z" fill="#c8c8c8"/>
<path d="M1234 284.5 H1241 L1237.5 291 Z" fill="#c8c8c8"/>
<rect x="1037" y="303" width="13.5" height="13" rx="2" fill="#9a9a9a"/><path d="M1039.8 309.5 L1042.6 312.5 L1047.6 306" fill="none" stroke="#2c2c2c" stroke-width="1.7"/>
<rect x="1037.8" y="322.8" width="12" height="11.8" rx="1.5" fill="none" stroke="#9a9a9a" stroke-width="1.5"/>
<path d="M1070 336 L1084 322" stroke="#d83a2a" stroke-width="1.6"/>
<path d="M1034 258.5 H1043 V262 H1042.3 L1041.7 260.2 H1039.4 V268.8 L1040.8 269.1 V270.3 H1036.2 V269.1 L1037.6 268.8 V260.2 H1035.3 L1034.7 262 H1034 Z" fill="#c4c4c4"/>
<path d="M1042.5 255.5 H1053.5 V260 H1052.7 L1052 257.6 H1049.2 V268.6 L1051 269 V270.3 H1045 V269 L1046.8 268.6 V257.6 H1044 L1043.3 260 H1042.5 Z" fill="#c4c4c4"/>
<path d="M1154.5 256.5 V270.5 M1152.3 258.8 L1154.5 256.3 L1156.7 258.8 M1152.3 268.2 L1154.5 270.7 L1156.7 268.2" fill="none" stroke="#c4c4c4" stroke-width="1.2"/><path d="M1158 262.5 L1162.5 254.5 L1167 262.5 M1159.8 259.5 H1165.2 M1156.5 262.8 H1168.5 M1158 271 L1162.5 264 L1167 271 M1159.8 268.5 H1165.2 M1156.5 271.3 H1168.5" fill="none" stroke="#c4c4c4" stroke-width="1.1"/>
<path d="M1034.5 282 L1038.5 292 L1042.5 282 M1045 281 L1040.5 293 M1041.5 292 L1046 282 L1050.5 292 M1043 289 H1049 M1051.5 295 H1045.5 M1047.5 293 L1045.3 295 L1047.5 297" fill="none" stroke="#c4c4c4" stroke-width="1.3"/>
<rect x="1152" y="280" width="16.5" height="10.5" fill="#c4c4c4"/><path d="M1154 282 L1157 289 L1160 282 M1159.5 289 L1162.8 282 L1166.2 289 M1160.8 287 H1164.8" fill="none" stroke="#262626" stroke-width="1.4"/><path d="M1153 294 H1168 M1155 292.2 L1153 294 L1155 295.8 M1166 292.2 L1168 294 L1166 295.8" fill="none" stroke="#c4c4c4" stroke-width="1.1"/>
<g transform="translate(1159.5,310) rotate(45)"><rect x="-2.6" y="-9.5" width="5.2" height="5.5" rx="2.2" fill="#c4c4c4"/><path d="M-4 -3.3 H4" stroke="#c4c4c4" stroke-width="1.6"/><path d="M-2 -2.5 V6 L0 9 L2 6 V-2.5" fill="none" stroke="#c4c4c4" stroke-width="1.2"/></g>
<g transform="translate(1159.5,329) rotate(45)"><rect x="-2.6" y="-9.5" width="5.2" height="5.5" rx="2.2" fill="#c4c4c4"/><path d="M-4 -3.3 H4" stroke="#c4c4c4" stroke-width="1.6"/><path d="M-2 -2.5 V6 L0 9 L2 6 V-2.5" fill="none" stroke="#c4c4c4" stroke-width="1.2"/></g>
<circle cx="1043" cy="355" r="1.6" fill="#c8c8c8"/><circle cx="1048.5" cy="355" r="1.6" fill="#c8c8c8"/><circle cx="1054" cy="355" r="1.6" fill="#c8c8c8"/>
<path d="M1263 385.5 H1271 M1263 388.5 H1271 M1263 391.5 H1271" stroke="#c0c0c0" stroke-width="1.3"/>
<path d="M1040.5 408.5 H1054.5 M1040.5 411.3 H1050.5 M1040.5 414.1 H1054.5 M1040.5 416.9 H1052.5 M1040.5 419.7 H1054.5 " stroke="#3e8ee0" stroke-width="1.3"/>
<path d="M1070.1 408.5 H1084.1 M1072.1 411.3 H1082.1 M1070.1 414.1 H1084.1 M1072.1 416.9 H1082.1 M1070.1 419.7 H1084.1 " stroke="#c0c0c0" stroke-width="1.3"/>
<path d="M1099.7 408.5 H1113.7 M1103.7 411.3 H1113.7 M1099.7 414.1 H1113.7 M1101.7 416.9 H1113.7 M1099.7 419.7 H1113.7 " stroke="#c0c0c0" stroke-width="1.3"/>
<path d="M1129.3 408.5 H1143.3 M1129.3 411.3 H1143.3 M1129.3 414.1 H1143.3 M1129.3 416.9 H1143.3 M1132.3 419.7 H1140.3 " stroke="#5a5a5a" stroke-width="1.3"/>
<path d="M1158.9 408.5 H1172.9 M1158.9 411.3 H1172.9 M1158.9 414.1 H1172.9 M1158.9 416.9 H1172.9 M1161.9 419.7 H1169.9 " stroke="#5a5a5a" stroke-width="1.3"/>
<path d="M1188.5 408.5 H1202.5 M1188.5 411.3 H1202.5 M1188.5 414.1 H1202.5 M1188.5 416.9 H1202.5 M1191.5 419.7 H1199.5 " stroke="#5a5a5a" stroke-width="1.3"/>
<path d="M1218.1 408.5 H1232.1 M1218.1 411.3 H1232.1 M1218.1 414.1 H1232.1 M1218.1 416.9 H1232.1 M1221.1 419.7 H1229.1 " stroke="#5a5a5a" stroke-width="1.3"/>
<circle cx="1043" cy="443" r="1.6" fill="#c8c8c8"/><circle cx="1048.5" cy="443" r="1.6" fill="#c8c8c8"/><circle cx="1054" cy="443" r="1.6" fill="#c8c8c8"/>
<rect x="1012.1" y="22.6" width="285.6" height="457.1" rx="3" fill="none" stroke="#0c2a22" stroke-opacity="0.85" stroke-width="7.4"/><rect x="1012.1" y="22.6" width="285.6" height="457.1" rx="3" fill="none" stroke="#62e2c3" stroke-width="5.4"/>
<path d="M11 493 L15.5 497.5 M15.5 493 L11 497.5" stroke="#a0a0a0" stroke-width="1.1"/>
<path d="M90 491.5 H97.5 M90 495 H97.5 M90 498.5 H97.5" stroke="#c0c0c0" stroke-width="1.3"/>
<circle cx="108" cy="522" r="3.8" fill="none" stroke="#c8c8c8" stroke-width="1.4"/><path d="M105.3 524.8 L102 528" stroke="#c8c8c8" stroke-width="1.6"/><path d="M112.5 526 H117 L114.75 528.5 Z" fill="#c8c8c8"/>
<path d="M357 518.5 H363 M359 516.5 L357 518.5 L359 520.5 M361 519 H366.5 V528 H370 M366.5 523.5 H370" fill="none" stroke="#c4c4c4" stroke-width="1.3"/><rect x="366" y="517" width="4" height="3" fill="#c4c4c4"/><rect x="369" y="522" width="3" height="3" fill="#c4c4c4"/><path d="M369 529 H373 L371 531 Z" fill="#c4c4c4"/>
<path d="M389.5 524 C389.5 517 403.5 517 403.5 524 Z" fill="#c4c4c4"/><rect x="389" y="525" width="15" height="5" fill="#5a5a5a"/><path d="M396.5 519 V530 M393.5 523 H399.5" stroke="#262626" stroke-width="1.2"/>
<rect x="413" y="521" width="10" height="10" fill="#6a6a6a"/><rect x="415.5" y="518.5" width="10" height="10" fill="#8a8a8a"/><rect x="418" y="516" width="10" height="11" fill="#c4c4c4"/><path d="M420 521 H426" stroke="#262626" stroke-width="1.2"/>
<circle cx="442" cy="527" r="4.2" fill="none" stroke="#9a9a9a" stroke-width="1.3"/><circle cx="445" cy="524" r="4.2" fill="#262626" stroke="#b0b0b0" stroke-width="1.3"/><circle cx="448" cy="521" r="4.2" fill="#c4c4c4"/>
<rect x="470" y="518" width="14" height="13" fill="none" stroke="#c4c4c4" stroke-width="1.3"/><path d="M472 521 C476 521 477 528 482 528" fill="none" stroke="#c4c4c4" stroke-width="1.3"/><path d="M472 516.5 V518 M474.5 516.5 V518 M477 516.5 V518 M479.5 516.5 V518 M482 516.5 V518" stroke="#c4c4c4" stroke-width="0.9"/>
<path d="M7 550 C9.5 546.5 14.5 546.5 17 550 C14.5 553.5 9.5 553.5 7 550 Z" fill="#c8c8c8"/><circle cx="12" cy="550" r="1.9" fill="#262626"/>
<path d="M20.5 548 H23 L27 545 V555 L23 552 H20.5 Z" fill="#c8c8c8"/><path d="M28.5 547.5 C30 549 30 551 28.5 552.5 M30 546 C32.5 548.5 32.5 551.5 30 554" fill="none" stroke="#c8c8c8" stroke-width="1.1"/>
<circle cx="39.5" cy="550" r="3.5" fill="#c8c8c8"/>
<rect x="48" y="549" width="10" height="7" rx="1" fill="#c8c8c8"/><path d="M50.3 549 V546.8 C50.3 543.5 55.7 543.5 55.7 546.8 V549" fill="none" stroke="#c8c8c8" stroke-width="1.4"/>
<path d="M78 544.5 H83 L89.5 551 L84.5 556 L78 549.5 Z" fill="#c8c8c8"/><circle cx="81" cy="547.5" r="1.1" fill="#262626"/>
<path d="M252 550 C252 544 263 544 263 550 Z" fill="#c8c8c8"/><path d="M252 553 H263" stroke="#c8c8c8" stroke-width="1.3"/><path d="M257.5 545.5 V554 M255 548.5 H260" stroke="#262626" stroke-width="1"/>
<circle cx="272" cy="550" r="2.5" fill="none" stroke="#c8c8c8" stroke-width="1.3"/><path d="M272 544.5 V546 M272 554 V555.5 M266.5 550 H268 M276 550 H277.5 M268 546 L269 547 M275 553 L276 554 M276 546 L275 547 M269 553 L268 554" stroke="#c8c8c8" stroke-width="1.1"/>
<path d="M280.5 545 L290 555" stroke="#c8c8c8" stroke-width="1.5" stroke-dasharray="2 1"/>
<rect x="307" y="545" width="12" height="10" fill="#c8c8c8"/><rect x="309" y="547" width="8" height="4" fill="#6a6a6a"/><path d="M307 553 H319" stroke="#6a6a6a" stroke-width="1"/>
<circle cx="325" cy="553" r="3.8" fill="none" stroke="#9a9a9a" stroke-width="1.2"/><circle cx="328.5" cy="549.5" r="4.2" fill="#8a8a8a" stroke="#c8c8c8" stroke-width="1.2"/>
<circle cx="341.5" cy="550" r="5" fill="#c8c8c8"/><path d="M345 546.5 A5 5 0 0 1 338 553.5 Z" fill="#262626"/><circle cx="341.5" cy="550" r="5" fill="none" stroke="#c8c8c8" stroke-width="1.2"/>
<path d="M355.5 545 L360.5 547.5 V552.5 L355.5 555 L350.5 552.5 V547.5 Z M350.5 547.5 L355.5 550 L360.5 547.5 M355.5 550 V555" fill="none" stroke="#c8c8c8" stroke-width="1.1"/>
<path d="M7 567 C9.5 563.5 14.5 563.5 17 567 C14.5 570.5 9.5 570.5 7 567 Z" fill="#cfcfcf"/><circle cx="12" cy="567" r="1.9" fill="#2e2e2e"/>
<path d="M71.5 564 L74.5 567 L71.5 570" fill="none" stroke="#c0c0c0" stroke-width="1.2"/>
<path d="M130 562 H139 V565 H138.3 L137.7 563.3 H135.4 V571.3 L136.6 571.6 V572.3 H132.4 V571.6 L133.6 571.3 V563.3 H131.3 L130.7 565 H130 Z" fill="#c8c8c8"/>
<path d="M253 567 C253 561 264 561 264 567 Z" fill="#c8c8c8"/><path d="M253 570 H264" stroke="#c8c8c8" stroke-width="1.3"/><path d="M258.5 562.5 V571 M256 565.5 H261" stroke="#262626" stroke-width="1"/>
<circle cx="272.5" cy="567.5" r="2.3" fill="none" stroke="#8a8a8a" stroke-width="1.2"/><path d="M272.5 562.5 V564 M272.5 571 V572.5 M267.5 567.5 H269 M276 567.5 H277.5" stroke="#8a8a8a" stroke-width="1"/>
<path d="M282 572 L291 563" stroke="#d0d0d0" stroke-width="1.4"/>
<path d="M386 567 A1.5 1.5 0 0 1 383 567 A3 3 0 0 1 389 567 A4.5 4.5 0 0 1 380 567 A6 6 0 0 1 392 567" fill="none" stroke="#9a9a9a" stroke-width="1.1"/>
<path d="M468.5 565.5 L472 569 L475.5 565.5" fill="none" stroke="#d0d0d0" stroke-width="1.5"/>
<path d="M507 513 H504 A4 4 0 0 0 504 521 H507 Z" fill="#3d8fe3"/><path d="M1277 513 H1280 A4 4 0 0 1 1280 521 H1277 Z" fill="#3d8fe3"/>
<path d="M507 541 H504 A3.5 3.5 0 0 0 500.5 544.5 V551.5 A3.5 3.5 0 0 0 504 555 H507 Z" fill="#3d8fe3"/><path d="M1277 541 H1280 A3.5 3.5 0 0 1 1283.5 544.5 V551.5 A3.5 3.5 0 0 1 1280 555 H1277 Z" fill="#3d8fe3"/>
<path d="M500.8 527.2 Q500.8 524.6 503.4 524.6 H509.6 Q512.2 524.6 512.2 527.2 V531.2 L506.5 539 L500.8 531.2 Z" fill="#3f8fe0" stroke="#0e1a28" stroke-width="0.8"/><path d="M505 532.5 H508" stroke="#8fc0f0" stroke-width="0.6"/>
<path d="M1288 542 H1298 V551 L1293 556 L1288 551 Z" fill="#c8c8c8"/>
<path d="M1285 567 L1291 561 H1298 V571 H1291 Z" fill="none" stroke="#c8c8c8" stroke-width="1.3"/><circle cx="1290.5" cy="570" r="2.6" fill="#262626" stroke="#c8c8c8" stroke-width="1.3"/>
<rect x="8.5" y="785.5" width="7" height="7" fill="#2b5f99" stroke="#4a95e0" stroke-width="1"/><rect x="11.5" y="788.5" width="7" height="7" fill="#2b5f99" stroke="#4a95e0" stroke-width="1"/><circle cx="15" cy="792" r="0.9" fill="#bde"/>
<circle cx="30" cy="789" r="3.5" fill="none" stroke="#c8c8c8" stroke-width="1.3"/><rect x="30.5" y="789.5" width="6" height="5.5" fill="#262626" stroke="#c8c8c8" stroke-width="1.3"/>
<circle cx="65.5" cy="789" r="3.8" fill="#c8c8c8"/><path d="M61 793.5 H72 M70 789 V786 M72 787.5 V785.5" stroke="#c8c8c8" stroke-width="1.3"/>
<path d="M505 791.5 L508.5 787.5 L510 789 L511 788 L513 791.5 Z" fill="#c8c8c8"/>
<circle cx="529" cy="790" r="4.2" fill="#262626" stroke="#bdbdbd" stroke-width="1.5"/><path d="M534 789.5 H569" stroke="#3e3e3e" stroke-width="1.2"/>
<path d="M580 792.5 L585 785.5 L586 786.5 M584.5 792.5 L590 784.5 L596 792.5 Z" fill="#c8c8c8" stroke="#c8c8c8" stroke-width="1"/>
<path d="M153.2 141.5 L289.4 27.6" stroke="#0c2a22" stroke-opacity="0.8" stroke-width="5.800000000000001" stroke-linecap="round"/><path d="M303.5 15.8 L292.0 37.8 L289.4 27.6 L279.8 23.3 Z" fill="#0c2a22" fill-opacity="0.8" stroke="#0c2a22" stroke-opacity="0.8" stroke-width="2.4" stroke-linejoin="round"/>
<path d="M153.2 141.5 L289.4 27.6" stroke="#62e2c3" stroke-width="4.2" stroke-linecap="round"/>
<path d="M303.5 15.8 L292.0 37.8 L289.4 27.6 L279.8 23.3 Z" fill="#62e2c3" stroke="#62e2c3" stroke-width="1" stroke-linejoin="round"/>
<path d="M248.8 421.8 L388.7 315.0" stroke="#0c2a22" stroke-opacity="0.8" stroke-width="5.800000000000001" stroke-linecap="round"/><path d="M404.0 303.3 L390.9 325.7 L388.7 315.0 L379.0 310.1 Z" fill="#0c2a22" fill-opacity="0.8" stroke="#0c2a22" stroke-opacity="0.8" stroke-width="2.4" stroke-linejoin="round"/>
<path d="M248.8 421.8 L388.7 315.0" stroke="#62e2c3" stroke-width="4.2" stroke-linecap="round"/>
<path d="M404.0 303.3 L390.9 325.7 L388.7 315.0 L379.0 310.1 Z" fill="#62e2c3" stroke="#62e2c3" stroke-width="1" stroke-linejoin="round"/>
</svg>
</body></html>
